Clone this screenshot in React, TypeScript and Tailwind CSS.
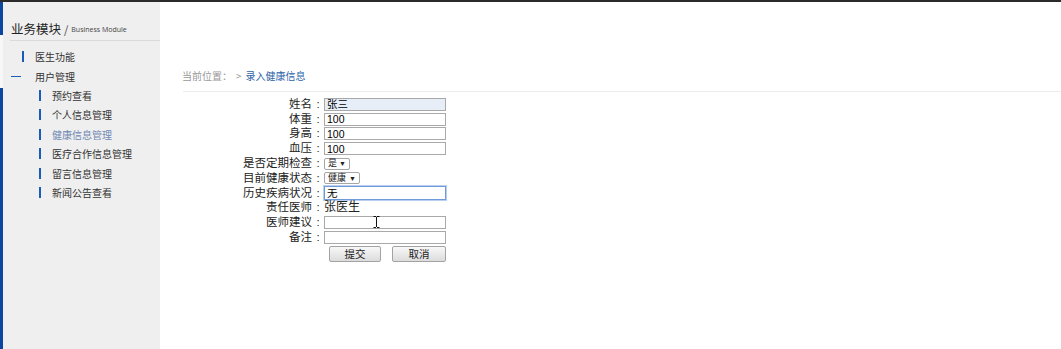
import { ReactNode } from "react";

const cn = "font-['Noto_Sans_CJK_SC','Liberation_Sans',sans-serif]";
const form = "font-['Liberation_Sans','Noto_Sans_CJK_SC',sans-serif]";

const subMenu = [
  { name: "预约查看" },
  { name: "个人信息管理" },
  { name: "健康信息管理", active: true },
  { name: "医疗合作信息管理" },
  { name: "留言信息管理" },
  { name: "新闻公告查看" },
];

const Row = ({ label, children }: { label: string; children: ReactNode }) => (
  <div className="flex h-[14.8px] items-center">
    <div className="flex w-[124px] shrink-0 justify-end text-[11.5px] leading-[13px] text-[#222]">
      <span>{label}</span>
      <span className="w-[12px] text-center">:</span>
    </div>
    <div className="flex h-full items-center">{children}</div>
  </div>
);

const TextBox = ({ value = "", bg = "bg-white", focus = false }: { value?: string; bg?: string; focus?: boolean }) => (
  <div
    className={`flex h-[13px] w-[122px] items-center px-[2px] text-[10.5px] leading-none text-black ${bg} ${
      focus ? "h-[14px] border border-[#6f9ad8] shadow-[0_0_0_1px_#b9d0f0]" : "border border-[#a9a9a9]"
    }`}
  >
    {value}
  </div>
);

const Select = ({ value, width }: { value: string; width: string }) => (
  <div
    className={`flex h-[12px] ${width} items-center justify-between rounded-[2px] border border-[#a6a6a6] bg-white px-[3px] text-[9px] leading-none text-[#222]`}
  >
    <span>{value}</span>
    <span className="text-[7px]">▼</span>
  </div>
);

export default function App() {
  return (
    <div className={`flex h-[349px] w-[1061px] flex-col overflow-hidden bg-white ${cn}`}>
      <div className="h-[2px] bg-[#2b2b2b]" />
      <div className="flex flex-1">
        {/* sidebar */}
        <div className="flex w-[160px] bg-[#efefef]">
          <div className="flex w-[3px] flex-col">
            <div className="h-[33px] bg-[#0b47a1]" />
            <div className="h-[53px] bg-[#f7f7f7]" />
            <div className="flex-1 bg-[#0b47a1]" />
          </div>
          <div className="flex-1">
            <div className="ml-[7px] flex h-[39px] items-end border-b border-[#dadada] pb-[2px]">
              <span className="ml-[1px] text-[12.5px] leading-[18px] text-[#222]">业务模块</span>
              <span className="ml-[3px] text-[11px] leading-[18px] text-[#444]">/</span>
              <span className="ml-[3px] text-[7px] leading-[16px] text-[#444] font-['Open_Sans',sans-serif]">
                Business Module
              </span>
            </div>
            <div className="mt-[6px] text-[10px] text-[#333]">
              <div className="flex h-[19.4px] items-center">
                <span className="ml-[19px] h-[11px] w-[2px] bg-[#1a5bb8]" />
                <span className="ml-[11px]">医生功能</span>
              </div>
              <div className="flex h-[19.4px] items-center">
                <span className="ml-[8px] h-[1px] w-[10px] bg-[#1a5bb8]" />
                <span className="ml-[14px]">用户管理</span>
              </div>
              {subMenu.map((m) => (
                <div key={m.name} className="flex h-[19.4px] items-center">
                  <span className="ml-[36px] h-[11px] w-[2px] bg-[#1a5bb8]" />
                  <span className={`ml-[11px] ${m.active ? "text-[#7089b4]" : ""}`}>{m.name}</span>
                </div>
              ))}
            </div>
          </div>
        </div>

        {/* main */}
        <div className="flex-1">
          <div className="ml-[22px] mt-[67px] flex h-[14px] items-center text-[10px] leading-none text-[#999]">
            <span>当前位置：</span>
            <span className="ml-[4px]">&gt;</span>
            <span className="ml-[4px] text-[#2d63a8]">录入健康信息</span>
          </div>
          <div className="ml-[23px] mt-[8px] h-[1px] bg-[#ececec]" />

          <div className={`relative ml-[40px] mt-[5px] ${form}`}>
            <Row label="姓名">
              <TextBox value="张三" bg="bg-[#e8eef8]" />
            </Row>
            <Row label="体重">
              <TextBox value="100" />
            </Row>
            <Row label="身高">
              <TextBox value="100" />
            </Row>
            <Row label="血压">
              <TextBox value="100" />
            </Row>
            <Row label="是否定期检查">
              <Select value="是" width="w-[26px]" />
            </Row>
            <Row label="目前健康状态">
              <Select value="健康" width="w-[36px]" />
            </Row>
            <Row label="历史疾病状况">
              <TextBox value="无" focus />
            </Row>
            <Row label="责任医师">
              <span className="text-[12px] leading-[13px] text-[#222]">张医生</span>
            </Row>
            <Row label="医师建议">
              <TextBox />
            </Row>
            <Row label="备注">
              <TextBox />
            </Row>
            <div className="ml-[129px] mt-[1px] flex gap-[11px]">
              <button className="h-[16px] w-[52px] rounded-[2px] border border-[#a3a3a3] bg-gradient-to-b from-[#f8f8f8] to-[#dcdcdc] text-[10.5px] leading-none text-[#222]">
                提交
              </button>
              <button className="h-[16px] w-[54px] rounded-[2px] border border-[#a3a3a3] bg-gradient-to-b from-[#f8f8f8] to-[#dcdcdc] text-[10.5px] leading-none text-[#222]">
                取消
              </button>
            </div>
            {/* mouse text cursor */}
            <svg className="absolute left-[173px] top-[119px]" width="7" height="12" viewBox="0 0 7 12">
              <path d="M0.5 0.5h2.5M4 0.5h2.5M3.5 1v10M0.5 11.5h2.5M4 11.5h2.5" stroke="#111" strokeWidth="1" fill="none" />
            </svg>
          </div>
        </div>
      </div>
    </div>
  );
}
